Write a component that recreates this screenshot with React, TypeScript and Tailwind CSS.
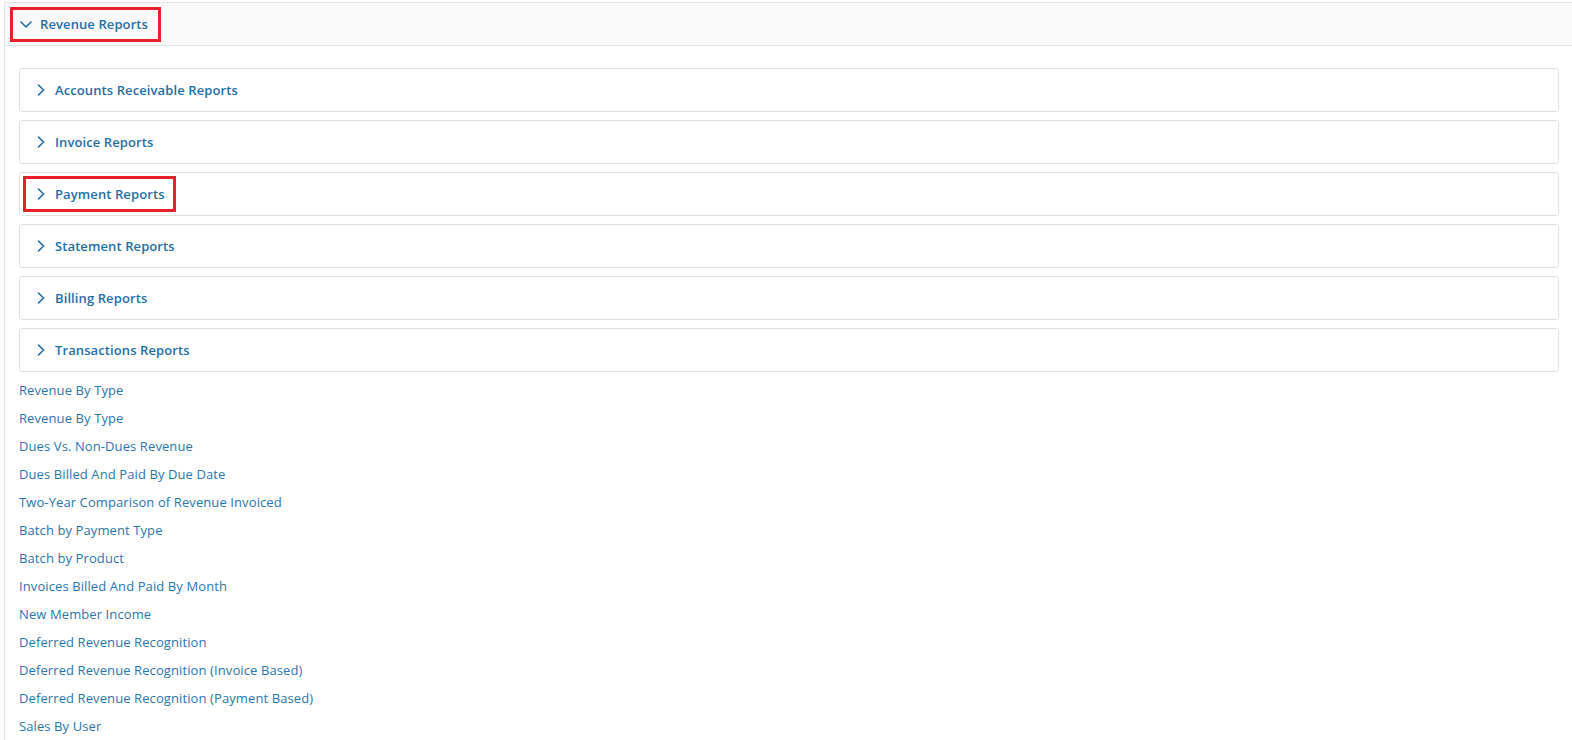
import React from "react";

const sections = [
  "Accounts Receivable Reports",
  "Invoice Reports",
  "Payment Reports",
  "Statement Reports",
  "Billing Reports",
  "Transactions Reports",
];

const links = [
  "Revenue By Type",
  "Revenue By Type",
  "Dues Vs. Non-Dues Revenue",
  "Dues Billed And Paid By Due Date",
  "Two-Year Comparison of Revenue Invoiced",
  "Batch by Payment Type",
  "Batch by Product",
  "Invoices Billed And Paid By Month",
  "New Member Income",
  "Deferred Revenue Recognition",
  "Deferred Revenue Recognition (Invoice Based)",
  "Deferred Revenue Recognition (Payment Based)",
  "Sales By User",
];

function ChevRight() {
  return (
    <svg width="8" height="12" viewBox="0 0 8 12" className="shrink-0">
      <polyline points="1.5,1 6.5,6 1.5,11" fill="none" stroke="#1f6fa6" strokeWidth="1.6" strokeLinecap="round" strokeLinejoin="round" />
    </svg>
  );
}

function ChevDown() {
  return (
    <svg width="12" height="7" viewBox="0 0 12 7" className="shrink-0">
      <polyline points="1,1 6,6 11,1" fill="none" stroke="#1f6fa6" strokeWidth="1.6" strokeLinecap="round" strokeLinejoin="round" />
    </svg>
  );
}

export default function App() {
  return (
    <div
      className="w-full h-[740px] overflow-hidden bg-white pt-[2px] pl-[4px]"
      style={{ fontFamily: '"Open Sans", "Noto Sans", sans-serif' }}
    >
      <div className="border-l border-t border-[#e2e4e6] h-full">
        <div className="h-[43px] bg-[#f9f9f9] border-b border-[#e2e4e6] flex items-center pl-[5px]">
          <div className="h-[35px] w-[151px] border-[3px] border-[#e8202a] flex items-center pl-[7px] gap-[8px]">
            <ChevDown />
            <span className="text-[13px] font-semibold text-[#1f6fa6] tracking-[0.1px] translate-y-[1px]">Revenue Reports</span>
          </div>
        </div>
        <div className="pl-[14px] pr-[13px] pt-[22px]">
          <div className="flex flex-col gap-[8px]">
            {sections.map((s) => (
              <div key={s} className="h-[44px] border border-[#dfe2e5] rounded-[3px] bg-white flex items-center pl-[3px]">
                {s === "Payment Reports" ? (
                  <div className="h-[36px] w-[153px] border-[3px] border-[#e8202a] flex items-center pl-[11px] gap-[10px]">
                    <ChevRight />
                    <span className="text-[13px] font-semibold text-[#1f6fa6] tracking-[0.1px] translate-y-[1px]">{s}</span>
                  </div>
                ) : (
                  <div className="h-[36px] flex items-center pl-[14px] gap-[10px]">
                    <ChevRight />
                    <span className="text-[13px] font-semibold text-[#1f6fa6] tracking-[0.1px] translate-y-[1px]">{s}</span>
                  </div>
                )}
              </div>
            ))}
          </div>
          <div className="mt-[5px] flex flex-col">
            {links.map((l, i) => (
              <div key={i} className="h-[28px] flex items-center">
                <span className="text-[13px] text-[#2a76ae] tracking-[0.1px]">{l}</span>
              </div>
            ))}
          </div>
        </div>
      </div>
    </div>
  );
}
